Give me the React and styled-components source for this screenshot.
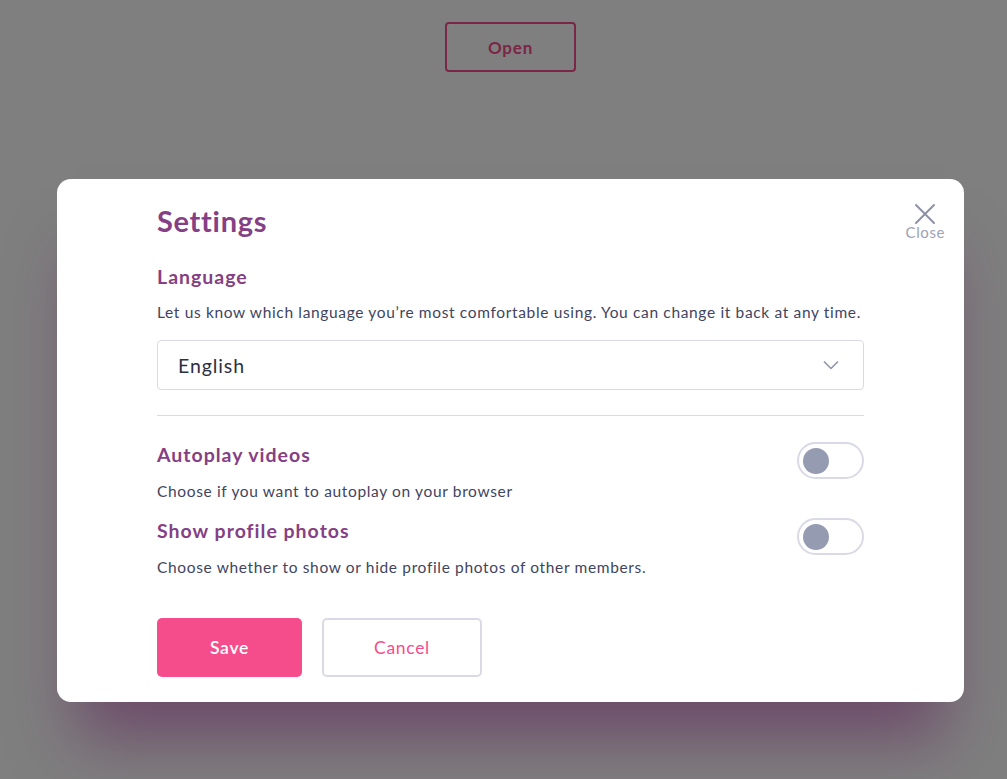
import React, { useState } from 'react';
import styled, { createGlobalStyle } from 'styled-components';

const colors = {
  purple: '#853f84',
  text: '#3f4560',
  muted: '#9ea2b4',
  line: '#d9dae6',
  knob: '#959bb1',
  pink: '#f54d8c',
};

const GlobalStyle = createGlobalStyle`
  html, body {
    margin: 0;
    padding: 0;
    height: 100%;
  }
  body {
    font-family: Lato, "Noto Sans", sans-serif;
    background: #ffffff;
  }
`;

const Page = styled.div`
  position: relative;
  width: 1007px;
  height: 779px;
  box-sizing: border-box;
  padding-left: 14px;
  overflow: hidden;
  display: flex;
  flex-direction: column;
  align-items: center;
`;

const OpenButton = styled.button`
  margin-top: 22px;
  width: 131px;
  height: 50px;
  border: 2px solid ${colors.pink};
  border-radius: 4px;
  background: #ffffff;
  color: ${colors.pink};
  font-family: Lato, sans-serif;
  font-weight: 700;
  font-size: 17px;
  letter-spacing: 0.8px;
`;

const Overlay = styled.div`
  position: absolute;
  inset: 0;
  padding-left: 14px;
  background: rgba(0, 0, 0, 0.5);
  display: flex;
  justify-content: center;
  padding-top: 179px;
  box-sizing: border-box;
`;

const Modal = styled.div`
  position: relative;
  width: 907px;
  height: 523px;
  box-sizing: border-box;
  background: #ffffff;
  border-radius: 14px;
  padding: 24px 100px 25px;
  display: flex;
  flex-direction: column;
  box-shadow: 0 55px 60px -20px rgba(96, 40, 92, 0.6);
`;

const Title = styled.h1`
  margin: 0;
  font-size: 29px;
  line-height: 36px;
  font-weight: 700;
  letter-spacing: 0.7px;
  color: ${colors.purple};
`;

const CloseButton = styled.button`
  position: absolute;
  top: 24px;
  right: 19px;
  background: none;
  border: none;
  padding: 0;
  display: flex;
  flex-direction: column;
  align-items: center;
  gap: 0;
  color: ${colors.muted};
  font-family: Lato, sans-serif;
  font-size: 15px;
  letter-spacing: 0.6px;
  line-height: 15px;
  cursor: pointer;
`;

const Heading = styled.h2`
  margin: ${(p) => p.$top || 0}px 0 0;
  font-size: 19.5px;
  line-height: 24px;
  font-weight: 700;
  letter-spacing: 1px;
  color: ${colors.purple};
`;

const Desc = styled.p`
  margin: ${(p) => p.$top || 0}px 0 0;
  font-size: 15.5px;
  line-height: 20px;
  letter-spacing: 0.65px;
  white-space: nowrap;
  color: ${colors.text};
`;

const Select = styled.div`
  margin-top: 18px;
  height: 50px;
  box-sizing: border-box;
  border: 1px solid ${colors.line};
  border-radius: 4px;
  display: flex;
  align-items: center;
  justify-content: space-between;
  padding: 0 24px 0 20px;
  font-size: 19.5px;
  letter-spacing: 0.9px;
  color: #2c2f3f;
`;

const Divider = styled.hr`
  margin: 25px 0 0;
  border: none;
  border-top: 1px solid ${colors.line};
`;

const OptionRow = styled.div`
  display: flex;
  justify-content: space-between;
  align-items: flex-start;
  margin-top: ${(p) => p.$top}px;
`;

const OptionText = styled.div`
  display: flex;
  flex-direction: column;
`;

const Track = styled.button`
  margin-top: -1px;
  width: 67px;
  height: 37px;
  box-sizing: border-box;
  border: 2px solid ${colors.line};
  border-radius: 19px;
  background: #ffffff;
  padding: 0 4px;
  display: flex;
  align-items: center;
  justify-content: ${(p) => (p.$on ? 'flex-end' : 'flex-start')};
  cursor: pointer;
`;

const Knob = styled.span`
  width: 26px;
  height: 26px;
  border-radius: 50%;
  background: ${(p) => (p.$on ? colors.pink : colors.knob)};
`;

const Actions = styled.div`
  margin-top: auto;
  display: flex;
  gap: 20px;
`;

const Button = styled.button`
  height: 59px;
  width: ${(p) => p.$w}px;
  box-sizing: border-box;
  border-radius: 5px;
  font-family: Lato, sans-serif;
  font-size: 17.5px;
  letter-spacing: 0.7px;
  cursor: pointer;
  border: ${(p) => (p.$primary ? 'none' : `2px solid ${colors.line}`)};
  background: ${(p) => (p.$primary ? colors.pink : '#ffffff')};
  color: ${(p) => (p.$primary ? '#ffffff' : colors.pink)};
  font-weight: ${(p) => (p.$primary ? 600 : 400)};
`;

const Toggle = () => {
  const [on, setOn] = useState(false);
  return (
    <Track $on={on} onClick={() => setOn(!on)}>
      <Knob $on={on} />
    </Track>
  );
};

export default function App() {
  return (
    <>
      <GlobalStyle />
      <Page>
        <OpenButton>Open</OpenButton>
        <Overlay>
          <Modal>
            <CloseButton>
              <svg width="22" height="22" viewBox="0 0 22 22">
                <path d="M2 2 L20 20 M20 2 L2 20" stroke="#8d91a6" strokeWidth="2" strokeLinecap="round" />
              </svg>
              Close
            </CloseButton>
            <Title>Settings</Title>
            <Heading $top={26}>Language</Heading>
            <Desc $top={13}>
              Let us know which language you’re most comfortable using. You can change it back at any time.
            </Desc>
            <Select>
              English
              <svg width="16" height="10" viewBox="0 0 16 10">
                <path d="M1 1.5 L8 8.5 L15 1.5" fill="none" stroke="#8d91a6" strokeWidth="1.5" />
              </svg>
            </Select>
            <Divider />
            <OptionRow $top={27}>
              <OptionText>
                <Heading>Autoplay videos</Heading>
                <Desc $top={14}>Choose if you want to autoplay on your browser</Desc>
              </OptionText>
              <Toggle />
            </OptionRow>
            <OptionRow $top={18}>
              <OptionText>
                <Heading>Show profile photos</Heading>
                <Desc $top={14}>Choose whether to show or hide profile photos of other members.</Desc>
              </OptionText>
              <Toggle />
            </OptionRow>
            <Actions>
              <Button $primary $w={145}>Save</Button>
              <Button $w={160}>Cancel</Button>
            </Actions>
          </Modal>
        </Overlay>
      </Page>
    </>
  );
}
